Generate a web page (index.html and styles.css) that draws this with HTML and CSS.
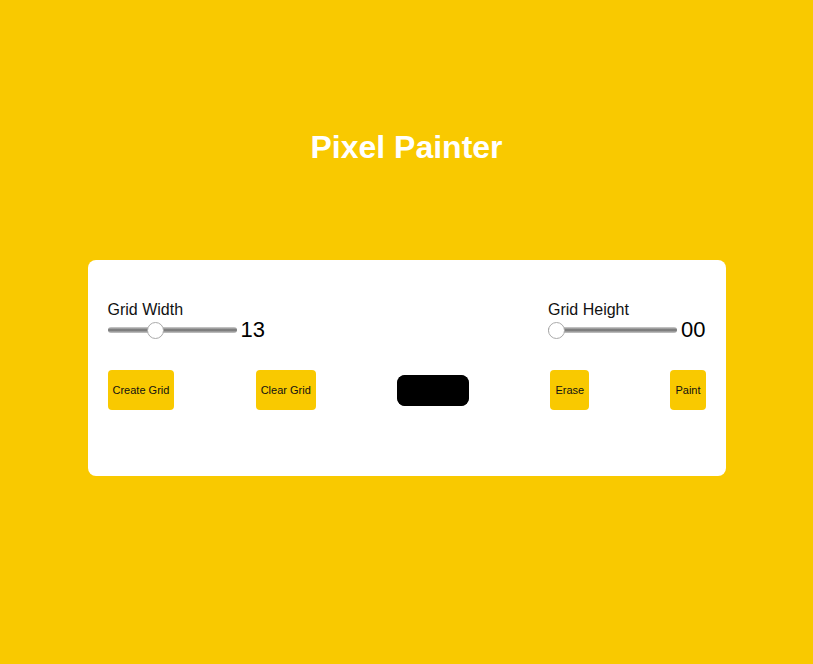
FILE: index.html
```html
<!DOCTYPE html>
<html lang="en">

<head>
  <meta charset="UTF-8">
  <meta name="viewport" content="width=device-width, initial-scale=1.0">
  <title>Pixel Painter</title>
  <link rel="stylesheet" href="styles.css">
</head>

<body>
  <h1 class="title">Pixel Painter</h1>

  <div class="panel">
    <!--grid size sliders-->
    <div class="sliders">
      <div class="slider-group">
        <label class="slider-label" for="width">Grid Width</label>
        <div class="slider-row">
          <input type="range" id="width" class="range" min="0" max="37" value="13">
          <span class="value">13</span>
        </div>
      </div>
      <div class="slider-group">
        <label class="slider-label" for="height">Grid Height</label>
        <div class="slider-row">
          <input type="range" id="height" class="range" min="0" max="37" value="0">
          <span class="value">00</span>
        </div>
      </div>
    </div>

    <!--buttons-->
    <div class="btns">
      <button class="btn">Create Grid</button>
      <button class="btn">Clear Grid</button>
      <input type="color" class="color" value="#000000">
      <button class="btn">Erase</button>
      <button class="btn">Paint</button>
    </div>
  </div>
</body>

</html>
```

FILE: styles.css
```css
body {
  margin: 0;
  background-color: #f9c900;
  font-family: "Liberation Sans", Arial, sans-serif;
}

.title {
  margin: 0;
  padding-top: 128px;
  text-align: center;
  color: #fff;
  font-size: 32px;
  line-height: 38px;
}

.panel {
  width: 598px;
  margin: 94px auto 0;
  padding: 40px 20px 66px;
  background-color: #fff;
  border-radius: 8px;
}

/*sliders*/
.sliders {
  display: flex;
  justify-content: space-between;
}

.slider-label {
  display: block;
  font-size: 16px;
  line-height: 20px;
  color: #111;
}

.slider-row {
  display: flex;
  align-items: center;
  height: 20px;
}

.range {
  -webkit-appearance: none;
  appearance: none;
  width: 129px;
  height: 6px;
  margin: 0 4px 0 0;
  border-radius: 3px;
  background: linear-gradient(#d0d0d0, #6f6f6f 50%, #c8c8c8);
}

.range::-webkit-slider-thumb {
  -webkit-appearance: none;
  width: 17px;
  height: 17px;
  border-radius: 50%;
  background: #fff;
  border: 1px solid #aaa;
}

.value {
  font-size: 22px;
  color: #000;
}

/*buttons*/
.btns {
  display: flex;
  justify-content: space-between;
  align-items: center;
  margin-top: 30px;
}

.btn {
  height: 40px;
  padding: 0 5px;
  border: none;
  border-radius: 4px;
  background-color: #f9c900;
  font-family: "Liberation Sans", Arial, sans-serif;
  font-size: 11px;
  color: #111;
}

.color {
  -webkit-appearance: none;
  appearance: none;
  width: 72px;
  height: 31px;
  padding: 0;
  border: none;
  border-radius: 8px;
  background: #000;
}

.color::-webkit-color-swatch-wrapper {
  padding: 0;
}

.color::-webkit-color-swatch {
  border: none;
  border-radius: 8px;
}
```
